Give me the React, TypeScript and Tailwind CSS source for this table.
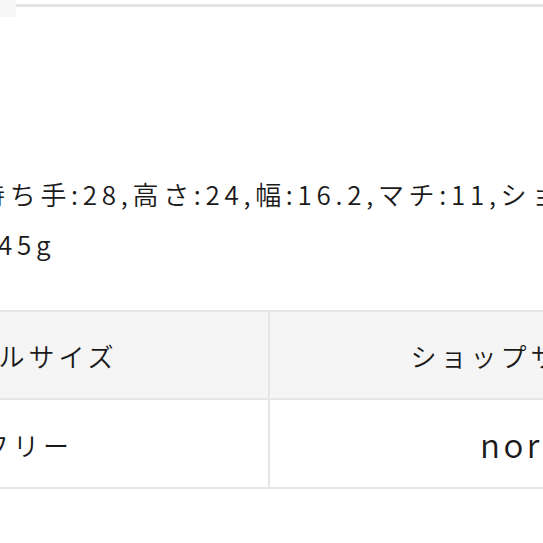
export default function App() {
  return (
    <div className="relative h-[543px] w-[543px] overflow-hidden bg-white font-['Noto_Sans_CJK_JP','Noto_Sans',sans-serif] font-[350] text-[#1a1a1a]">
      {/* faint leftover from the block above */}
      <div className="absolute left-0 top-0 h-[17px] w-[16px] bg-[#f7f7f7]" />

      {/* top rule */}
      <div className="mt-[4px] h-[3px] w-full bg-[#e4e4e4]" />

      {/* spec text, cropped on both sides */}
      <div className="ml-[-21px] mt-[162px] whitespace-nowrap text-[26px] leading-[50px] tracking-[4.7px]">
        <div>持ち手:28,高さ:24,幅:16.2,マチ:11,ショルダー:120</div>
        <div>345g</div>
      </div>

      {/* size table */}
      <div className="ml-[-216px] mt-[41px] w-[972px] border-y-2 border-[#e6e6e6] text-[26px] tracking-[4px]">
        <div className="flex h-[86px] bg-[#f5f5f5]">
          <div className="flex w-[486px] items-center justify-center border-r-2 border-[#e6e6e6] pl-[4px]">
            モデルサイズ
          </div>
          <div className="flex flex-1 items-center justify-center pl-[4px]">ショップサイズ</div>
        </div>
        <div className="flex h-[89px] border-t-2 border-[#e6e6e6]">
          <div className="flex w-[486px] items-center justify-center border-r-2 border-[#e6e6e6] pl-[4px] pt-[2px]">
            フリー
          </div>
          <div className="flex flex-1 items-center pl-[210px] pt-[2px] text-[33px] tracking-[3.5px]">
            normal
          </div>
        </div>
      </div>
    </div>
  );
}
